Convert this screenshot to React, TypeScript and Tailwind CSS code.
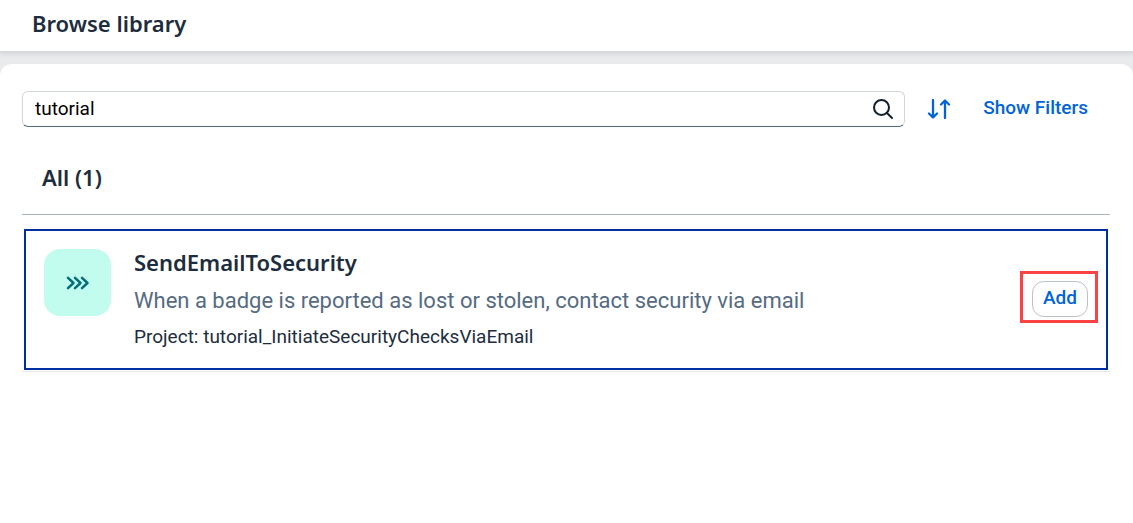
import { useState } from "react";

function SearchIcon() {
  return (
    <svg width="22" height="22" viewBox="0 0 22 22" fill="none" stroke="#131e29" strokeWidth="2" strokeLinecap="round" aria-hidden="true">
      <circle cx="9.5" cy="9.5" r="7.5" />
      <path d="M15 15l5 5" />
    </svg>
  );
}

function SortIcon() {
  return (
    <svg width="24" height="20" viewBox="0 0 24 20" fill="none" stroke="#0064d9" strokeWidth="2.300" strokeLinecap="round" strokeLinejoin="round" aria-hidden="true">
      <path d="M6 1v17M2 14.500l4 4 4-4" />
      <path d="M18 19V2M14 5.500l4-4 4 4" />
    </svg>
  );
}

function ProcessIcon() {
  return (
    <svg width="24" height="14" viewBox="0 0 24 14" fill="none" stroke="#046c7a" strokeWidth="2.500" strokeLinecap="round" strokeLinejoin="round" aria-hidden="true">
      <path d="M2 1.800l5.500 5.200L2 12.200M9 1.800l5.500 5.200L9 12.200M16 1.800l5.500 5.200L16 12.200" />
    </svg>
  );
}

function LibraryItem() {
  return (
    <li className="border-b border-[#e5e5e5] px-0.5 pb-px">
      <article className="flex items-center border-2 border-[#0030a0] p-[18px]">
        <div className="flex size-[67px] shrink-0 items-center justify-center self-start rounded-2xl bg-[#c2fcee]">
          <ProcessIcon />
        </div>
        <div className="ml-[23px] min-w-0 flex-1">
          <h3 className="text-[22px] leading-[27px] font-semibold">SendEmailToSecurity</h3>
          <p className="mt-2.5 font-['Roboto',sans-serif] text-[22px] leading-[30px] text-[#556b82]">
            When a badge is reported as lost or stolen, contact security via email
          </p>
          <p className="mt-2 font-['Roboto',sans-serif] text-[19px] leading-[26px]">
            Project: tutorial_InitiateSecurityChecksViaEmail
          </p>
        </div>
        <div className="pb-px">
          <div className="relative">
            <button type="button" className="block h-9 w-14 rounded-xl border border-[#bcc3ca] bg-white pb-0.5 font-['Roboto',sans-serif] text-[19px] font-medium text-[#0064d9]">
              Add
            </button>
            <span className="pointer-events-none absolute -top-2.5 -right-2.5 -bottom-1.5 -left-3 border-3 border-[#fc4343]" />
          </div>
        </div>
      </article>
    </li>
  );
}

export default function App() {
  const [query, setQuery] = useState("tutorial");
  return (
    <div className="flex min-h-screen flex-col bg-[#eaebed] font-['Noto_Sans',sans-serif] text-[#1d2d3e]">
      <header className="relative border-b-2 border-[#d9dadb] bg-white px-8 pt-2 pb-3 shadow-[0_2px_4px_#d9dbde]">
        <h1 className="text-[22px] leading-[31px] font-semibold">Browse library</h1>
      </header>
      <main className="mt-[11px] flex-1 rounded-t-xl bg-white pt-[27px] pr-[23px] pl-[22px]">
        <div className="flex items-center font-['Roboto',sans-serif]">
          <div className="flex h-9 min-w-0 flex-1 items-center rounded-md border border-[#d0d7dd] border-b-[#556b82] pr-2.5">
            <input
              type="text"
              aria-label="Search library"
              value={query}
              onChange={(e) => setQuery(e.target.value)}
              className="h-full min-w-0 flex-1 bg-transparent pb-0.5 pl-3 text-[19px] text-black outline-none"
            />
            <button type="button" aria-label="Search">
              <SearchIcon />
            </button>
          </div>
          <button type="button" aria-label="Sort" className="ml-[22px]">
            <SortIcon />
          </button>
          <button type="button" className="mr-[22px] ml-8 pb-0.5 text-[19px] font-medium text-[#0064d9]">
            Show Filters
          </button>
        </div>
        <section className="pt-[35px]">
          <h2 className="border-b border-[#a8b3bd] px-5 pb-[22px] text-[22px] leading-[30px] font-semibold">All (1)</h2>
          <ul className="pt-3.5">
            <LibraryItem />
          </ul>
        </section>
      </main>
    </div>
  );
}
